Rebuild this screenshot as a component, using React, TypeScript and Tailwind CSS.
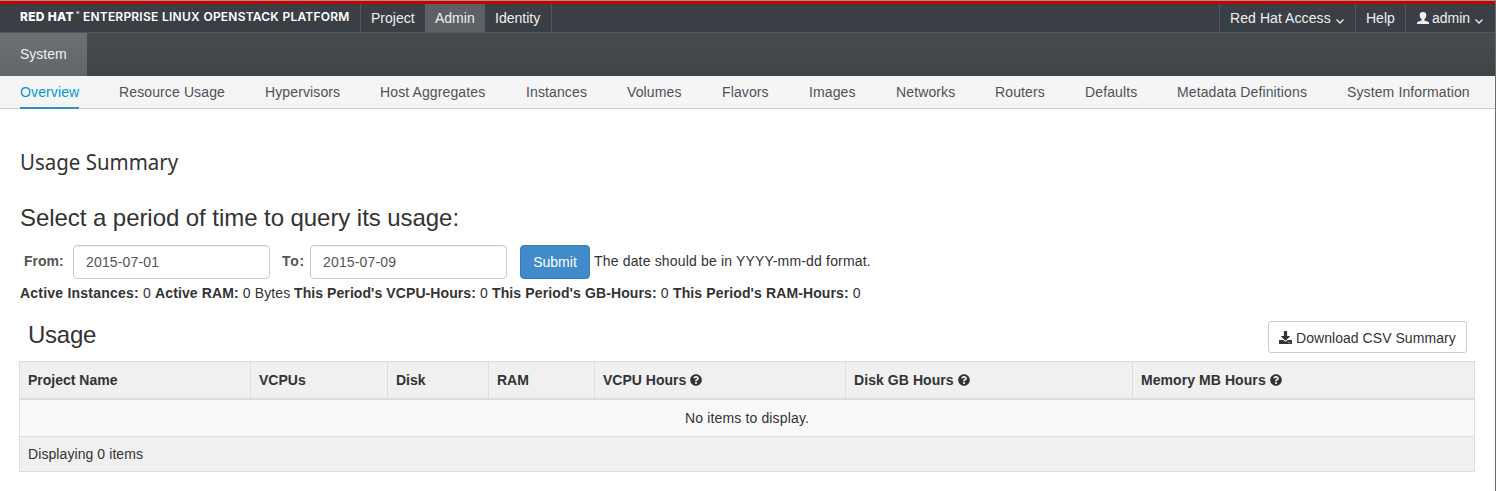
import { FaDownload, FaQuestionCircle } from "react-icons/fa";

const tabs: [string, string][] = [
  ["Overview", "w-[59px]"],
  ["Resource Usage", "w-[106px]"],
  ["Hypervisors", "w-[75px]"],
  ["Host Aggregates", "w-[106px]"],
  ["Instances", "w-[61px]"],
  ["Volumes", "w-[55px]"],
  ["Flavors", "w-[47px]"],
  ["Images", "w-[47px]"],
  ["Networks", "w-[59px]"],
  ["Routers", "w-[50px]"],
  ["Defaults", "w-[52px]"],
  ["Metadata Definitions", "w-[130px]"],
  ["System Information", "w-[123px]"],
];

const columns: [string, string, boolean][] = [
  ["Project Name", "w-[230px]", false],
  ["VCPUs", "w-[137px]", false],
  ["Disk", "w-[101px]", false],
  ["RAM", "w-[106px]", false],
  ["VCPU Hours", "w-[251px]", true],
  ["Disk GB Hours", "w-[287px] tracking-[0.07px]", true],
  ["Memory MB Hours", "w-[342px] tracking-[0.07px]", true],
];

const totals: [string, string, string][] = [
  ["Active Instances:", "0", "w-[135px] tracking-[0.22px]"],
  ["Active RAM:", "0 Bytes", "w-[139px] tracking-[0.12px]"],
  ["This Period's VCPU-Hours:", "0", "w-[198px] tracking-[0.08px]"],
  ["This Period's GB-Hours:", "0", "w-[181px] tracking-[0.12px]"],
  ["This Period's RAM-Hours:", "0", "w-[190px] tracking-[0.12px]"],
];

function Chevron() {
  return (
    <svg viewBox="0 0 8 5" className="mt-[6px] ml-[5px] h-[5px] w-[8px]" fill="none" stroke="currentColor" strokeWidth="1.3">
      <path d="M.5 .5 4 4 7.5 .5" />
    </svg>
  );
}

function UserIcon() {
  return (
    <svg viewBox="0 0 12 12" className="mr-[3px] h-[12px] w-[12px]" fill="currentColor">
      <path d="M6 0C3.800 0 2.700 1.200 2.700 3.200c0 1.700.8 3.200 1.900 4v1.300L.9 9.800C.3 10.100 0 10.500 0 11.100V12h12v-.9c0-.6-.3-1-.9-1.300L7.400 8.500V7.200C8.500 6.400 9.300 4.900 9.300 3.200 9.300 1.200 8.200 0 6 0Z" />
    </svg>
  );
}

export default function App() {
  return (
    <div className="h-[491px] w-[1496px] overflow-hidden border-t border-r border-t-[#999999] border-r-[#6b6b6b] bg-white font-['Liberation_Sans',Arial,sans-serif] text-[14px] leading-[20px] whitespace-nowrap text-[#333333]">
      <header className="flex h-[32px] border-t-[3px] border-b border-t-[#cc0000] border-b-[#53565b] bg-[#393f45] text-[#f0f0f0]">
        <div className="flex w-[361px] shrink-0 border-r border-[#53565b] pl-[20px] font-['Inter',sans-serif] text-[12px] leading-[25px] font-bold text-white">
          <span className="w-[56px] font-extrabold tracking-[0.3px]">RED HAT</span>
          <span className="w-[7px] text-[5px] leading-[18px]">®</span>
          <span className="font-semibold tracking-[0.2px] [word-spacing:0.5px]">ENTERPRISE LINUX OPENSTACK PLATFORM</span>
        </div>
        <nav className="flex leading-[28px]">
          <a className="w-[64px] pl-[10px]">Project</a>
          <a className="w-[60px] bg-[#5c6165] pl-[10px]">Admin</a>
          <a className="w-[67px] border-r border-[#53565b] pl-[10px]">Identity</a>
        </nav>
        <nav className="ml-auto flex leading-[28px]">
          <a className="flex w-[136px] items-center border-l border-[#53565b] pl-[10px] tracking-[0.08px]">Red Hat Access<Chevron /></a>
          <a className="w-[50px] border-l border-[#53565b] pl-[10px]">Help</a>
          <a className="flex w-[90px] items-center border-l border-[#53565b] pl-[11px]"><UserIcon />admin<Chevron /></a>
        </nav>
      </header>
      <div className="h-[43px] bg-linear-to-b from-[#474c50] to-[#3f4447]">
        <a className="block h-[43px] w-[87px] bg-linear-to-b from-[#6c6f74] to-[#62656a] pl-[20px] leading-[43px] text-[#f0f0f0]">System</a>
      </div>
      <nav className="flex h-[33px] gap-[40px] border-b border-[#cccccc] bg-[#f5f5f5] pl-[20px] leading-[32px] text-[#4d5258]">
        {tabs.map(([label, width], i) => (
          <a key={label} className={`${width} h-[33px] shrink-0 tracking-[0.12px] ${i === 0 ? "border-b-2 border-[#2d8fcb] text-[#0099d3]" : ""}`}>{label}</a>
        ))}
      </nav>
      <main className="pl-[20px]">
        <h1 className="mt-[39px] w-max origin-left scale-x-[0.93] font-['Noto_Sans',sans-serif] text-[22px] leading-[26px]">Usage Summary</h1>
        <h2 className="mt-[30px] text-[24px] leading-[28px] tracking-[-0.06px]">Select a period of time to query its usage:</h2>
        <form className="mt-[13px] flex h-[34px] items-center">
          <label className="w-[53px] pb-[2px] pl-[4px] font-bold text-[#555555]">From:</label>
          <input defaultValue="2015-07-01" className="h-[34px] w-[197px] rounded-[4px] border border-[#cccccc] px-[12px] tracking-[0.16px] text-[#555555] shadow-[inset_0_1px_1px_rgba(0,0,0,0.075)]" />
          <label className="w-[40px] pb-[2px] pl-[12px] font-bold tracking-[0.7px] text-[#555555]">To:</label>
          <input defaultValue="2015-07-09" className="h-[34px] w-[197px] rounded-[4px] border border-[#cccccc] px-[12px] tracking-[0.16px] text-[#555555] shadow-[inset_0_1px_1px_rgba(0,0,0,0.075)]" />
          <button type="button" className="ml-[13px] h-[34px] w-[70px] rounded-[4px] border border-[#357ebd] bg-[#428bca] text-white">Submit</button>
          <span className="ml-[4px] pb-[2px] tracking-[0.17px]">The date should be in YYYY-mm-dd format.</span>
        </form>
        <p className="mt-[4px] flex">
          {totals.map(([label, value, style]) => (
            <span key={label} className={style}><strong>{label}</strong> {value}</span>
          ))}
        </p>
        <div className="mt-[18px] flex h-[32px] w-[1447px] justify-between pl-[8px]">
          <h2 className="text-[24px] leading-[28px] tracking-[-0.25px]">Usage</h2>
          <button type="button" className="flex h-[32px] w-[199px] items-center rounded-[3px] border border-[#cccccc] pl-[10px]">
            <FaDownload className="mr-[4px] h-[13px] w-[13px]" />
            <span className="pt-[2px] tracking-[0.05px]">Download CSV Summary</span>
          </button>
        </div>
        <section className="mt-[8px] -ml-px w-[1456px] border border-[#dddddd]">
          <div className="flex h-[38px] border-b-2 border-[#dddddd] bg-[#f0f0f0] font-bold leading-[36px]">
            {columns.map(([label, width, help], i) => (
              <div key={label} className={`${width} flex shrink-0 items-center ${i > 0 ? "border-l border-[#dddddd]" : ""} pl-[8px]`}>
                {label}{help && <FaQuestionCircle className="ml-[4px] h-[12px] w-[12px]" />}
              </div>
            ))}
          </div>
          <div className="h-[37px] border-b border-[#dddddd] bg-[#f9f9f9] text-center leading-[36px] tracking-[0.15px]">No items to display.</div>
          <div className="h-[34px] bg-[#f0f0f0] pl-[8px] leading-[35px] tracking-[0.08px]">Displaying 0 items</div>
        </section>
      </main>
    </div>
  );
}
